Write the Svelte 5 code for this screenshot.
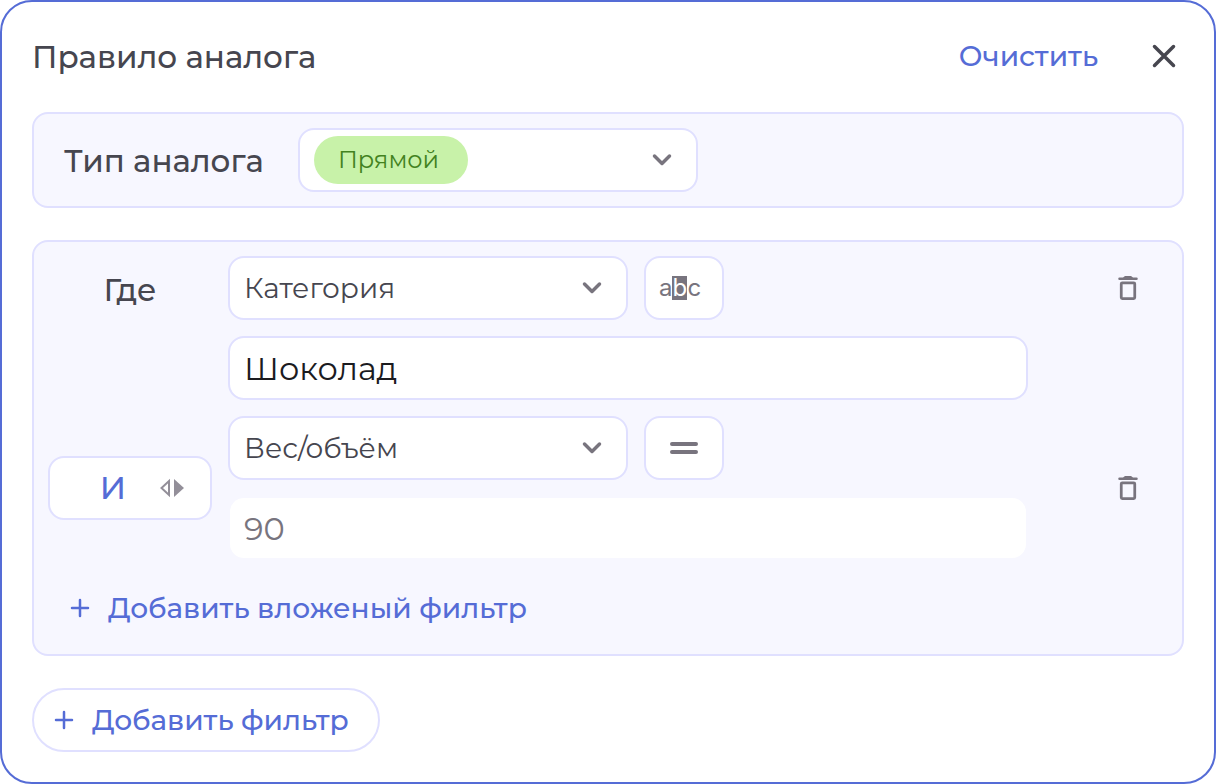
<script>
    const analogTypes = ["Прямой", "Косвенный"];
    const fields = ["Категория", "Вес/объём", "Бренд"];

    let analogType = $state("Прямой");
    let join = $state("И");
    let filters = $state([
        { field: "Категория", operator: "contains", value: "Шоколад" },
        { field: "Вес/объём", operator: "equals", value: "90" },
    ]);

    function toggleJoin() {
        join = join === "И" ? "ИЛИ" : "И";
    }

    function toggleOperator(filter) {
        filter.operator = filter.operator === "equals" ? "contains" : "equals";
    }

    function addFilter() {
        filters.push({ field: "Категория", operator: "contains", value: "" });
    }

    function removeFilter(index) {
        filters.splice(index, 1);
    }

    function clear() {
        filters = [];
    }
</script>

{#snippet chevron()}
    <svg class="chevron" width="24" height="24" viewBox="0 0 24 24">
        <path d="M4.5 8l7.5 7.5L19.5 8" />
    </svg>
{/snippet}

{#snippet plus()}
    <svg class="plus" width="32" height="32" viewBox="0 0 32 32">
        <path d="M16 8v16M8 16h16" />
    </svg>
{/snippet}

<section class="dialog">
    <header>
        <h1>Правило аналога</h1>
        <button class="clear" type="button" onclick={clear}>Очистить</button>
        <button class="close" type="button" aria-label="Закрыть">
            <svg width="32" height="32" viewBox="0 0 32 32">
                <path d="M6.5 6.5l19 19M25.5 6.5l-19 19" />
            </svg>
        </button>
    </header>

    <div class="panel type">
        <label for="analog-type">Тип аналога</label>
        <div class="select chip-select">
            <select id="analog-type" bind:value={analogType}>
                {#each analogTypes as type}
                    <option>{type}</option>
                {/each}
            </select>
            {@render chevron()}
        </div>
    </div>

    <div class="panel filters">
        {#each filters as filter, i}
            <div class="filter" class:first={i === 0}>
                {#if i === 0}
                    <div class="where">Где</div>
                {:else}
                    <button class="join" type="button" onclick={toggleJoin}>
                        {join}
                        <svg width="24" height="24" viewBox="0 0 24 24">
                            <path class="outline" d="M9 5v14L1.5 12z" />
                            <path d="M14 3l10 9-10 9z" />
                        </svg>
                    </button>
                {/if}
                <div class="condition">
                    <div class="row">
                        <div class="select">
                            <select bind:value={filter.field} aria-label="Поле">
                                {#each fields as field}
                                    <option>{field}</option>
                                {/each}
                            </select>
                            {@render chevron()}
                        </div>
                        <button
                            class="operator"
                            type="button"
                            aria-label="Условие"
                            onclick={() => toggleOperator(filter)}
                        >
                            {#if filter.operator === "contains"}
                                <span class="abc">a<mark>b</mark>c</span>
                            {:else}
                                <svg width="32" height="32" viewBox="0 0 32 32">
                                    <path d="M4 12h24M4 20h24" />
                                </svg>
                            {/if}
                        </button>
                    </div>
                    <input
                        class:plain={filter.operator === "equals"}
                        type="text"
                        bind:value={filter.value}
                        aria-label="Значение"
                    />
                </div>
                <button
                    class="remove"
                    type="button"
                    aria-label="Удалить"
                    onclick={() => removeFilter(i)}
                >
                    <svg width="32" height="32" viewBox="0 0 32 32">
                        <path
                            class="lid"
                            d="M7.5 5.5h3.5l2-1.5h6l2 1.500h3.500a1.250 1.250 0 0 1 0 2.500h-17a1.250 1.250 0 0 1 0-2.500z"
                        />
                        <rect x="9.25" y="10.75" width="13.5" height="15.75" rx="1" />
                    </svg>
                </button>
            </div>
        {/each}
        <button class="add" type="button" onclick={addFilter}>
            {@render plus()}
            Добавить вложеный фильтр
        </button>
    </div>

    <button class="add outlined" type="button" onclick={addFilter}>
        {@render plus()}
        Добавить фильтр
    </button>
</section>

<style>
    :global(body) {
        margin: 0;
        background: #fff;
    }

    .dialog {
        box-sizing: border-box;
        display: flex;
        flex-direction: column;
        gap: 32px;
        padding: 30px;
        border: 2px solid #556cd6;
        border-radius: 32px;
        background: #fff;
        color: #46464f;
        font-family: "Montserrat", "Inter", sans-serif;
        font-size: 32px;
        line-height: 48px;
    }

    .dialog * {
        box-sizing: border-box;
    }

    button,
    select,
    input {
        margin: 0;
        padding: 0;
        border: 0;
        background: none;
        color: inherit;
        font: inherit;
    }

    button {
        display: flex;
        align-items: center;
        cursor: pointer;
    }

    svg {
        display: block;
        flex: none;
        fill: none;
        stroke: #78747e;
        stroke-width: 4;
        stroke-linecap: round;
        stroke-linejoin: round;
    }

    header {
        display: flex;
        align-items: center;
        height: 48px;
    }

    h1,
    .type label,
    .where {
        padding-top: 2px;
        font-size: 31px;
        font-weight: 500;
    }

    h1 {
        flex: 1;
        margin: 0;
    }

    .clear {
        color: #556cd6;
        font-size: 28px;
        font-weight: 500;
    }

    .close {
        justify-content: center;
        width: 40px;
        height: 48px;
        margin-left: 46px;
    }

    .close svg {
        stroke: #46464f;
        stroke-width: 3.5;
    }

    .panel {
        padding: 14px;
        border: 2px solid #e0e0ff;
        border-radius: 16px;
        background: #f7f7ff;
    }

    .type {
        display: flex;
        align-items: center;
    }

    .type label {
        width: 250px;
        padding-left: 16px;
    }

    .select {
        display: flex;
        align-items: center;
        position: relative;
        width: 400px;
        height: 64px;
        border: 2px solid #e0e0ff;
        border-radius: 16px;
        background: #fff;
    }

    select {
        flex: 1;
        height: 60px;
        padding: 0 60px 0 14px;
        border-radius: 14px;
        appearance: none;
        font-size: 28px;
        cursor: pointer;
    }

    .chevron {
        position: absolute;
        right: 22px;
        pointer-events: none;
        stroke-width: 3.5;
    }

    .chip-select select {
        flex: none;
        width: 154px;
        height: 48px;
        margin-left: 14px;
        padding: 0 24px;
        border-radius: 24px;
        background: #c8f2a9;
        color: #43821f;
        font-size: 24px;
    }

    .filters {
        display: flex;
        flex-direction: column;
        gap: 16px;
    }

    .filter {
        display: grid;
        grid-template-columns: 164px minmax(0, 1fr) 124px;
        gap: 16px;
        align-items: center;
    }

    .filter.first {
        align-items: start;
    }

    .where {
        line-height: 64px;
        text-align: center;
    }

    .join {
        justify-content: flex-end;
        gap: 34px;
        height: 64px;
        padding-right: 26px;
        border: 2px solid #e0e0ff;
        border-radius: 16px;
        background: #fff;
        color: #556cd6;
        font-weight: 500;
    }

    .join svg {
        fill: #938f99;
        stroke: none;
    }

    .join .outline {
        fill: none;
        stroke: #938f99;
        stroke-width: 2;
        stroke-linejoin: miter;
    }

    .condition {
        display: flex;
        flex-direction: column;
        gap: 16px;
    }

    .row {
        display: flex;
        gap: 16px;
    }

    .operator {
        justify-content: center;
        width: 80px;
        height: 64px;
        border: 2px solid #e0e0ff;
        border-radius: 16px;
        background: #fff;
    }

    .abc {
        display: flex;
        align-items: center;
        padding-right: 8px;
        color: #78747e;
        font-family: "Inter", sans-serif;
        font-size: 24px;
        line-height: 24px;
    }

    mark {
        width: 15px;
        background: #78747e;
        color: #fff;
        text-align: center;
    }

    input {
        width: 100%;
        height: 64px;
        padding: 0 14px;
        border: 2px solid #e0e0ff;
        border-radius: 16px;
        background: #fff;
        background-clip: padding-box;
        color: #1b1b1f;
    }

    input.plain {
        border-color: transparent;
        color: #78747e;
    }

    .remove {
        justify-content: center;
        justify-self: end;
        width: 80px;
        height: 64px;
    }

    .remove svg {
        stroke-width: 2.75;
    }

    .remove .lid {
        fill: #78747e;
        stroke: none;
    }

    .add {
        align-self: flex-start;
        gap: 12px;
        height: 64px;
        padding: 0 16px;
        color: #556cd6;
        font-size: 28px;
        font-weight: 500;
    }

    .outlined {
        padding: 0 29px 0 14px;
        border: 2px solid #e0e0ff;
        border-radius: 32px;
    }

    .plus {
        stroke: #556cd6;
        stroke-width: 2.5;
    }
</style>
